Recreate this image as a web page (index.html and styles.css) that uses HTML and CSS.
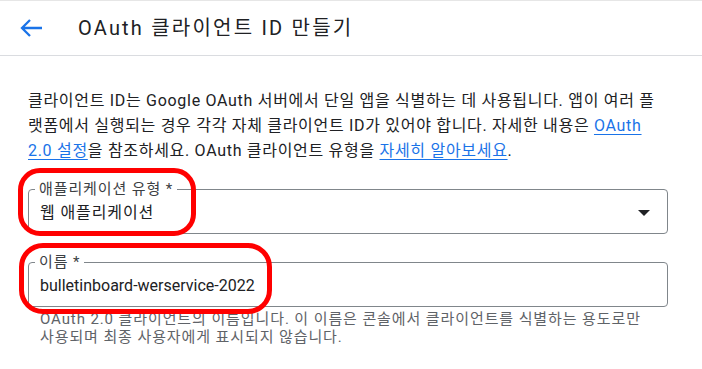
FILE: index.html
```html
<!DOCTYPE html>
<html lang="ko">
<head>
  <meta charset="UTF-8" />
  <meta name="viewport" content="width=device-width, initial-scale=1" />
  <title>OAuth 클라이언트 ID 만들기</title>
  <link rel="stylesheet" href="styles.css">
</head>
<body>
  <header class="topbar">
    <button class="back" aria-label="뒤로">
      <svg width="24" height="20" viewBox="0 0 24 20" aria-hidden="true">
        <path d="M2 10 H22 M10 2 L2 10 L10 18" fill="none" stroke="#1a73e8" stroke-width="2.3" />
      </svg>
    </button>
    <h1>OAuth 클라이언트 ID 만들기</h1>
  </header>

  <main class="content">
    <p class="intro">
      클라이언트 ID는 Google OAuth 서버에서 단일 앱을 식별하는 데 사용됩니다. 앱이 여러 플<br>랫폼에서 실행되는 경우 각각 자체 클라이언트 ID가 있어야 합니다. 자세한 내용은 <a href="#">OAuth<br>2.0 설정</a>을 참조하세요. OAuth 클라이언트 유형을 <a href="#">자세히 알아보세요</a>.
    </p>

    <fieldset class="field">
      <legend>애플리케이션 유형 *</legend>
      <div class="field-row">
        <span class="value value-ko">웹 애플리케이션</span>
        <span class="caret"></span>
      </div>
    </fieldset>

    <fieldset class="field field-name">
      <legend>이름 *</legend>
      <div class="field-row">
        <span class="value">bulletinboard-werservice-2022</span>
      </div>
    </fieldset>
    <p class="hint">OAuth 2.0 클라이언트의 이름입니다. 이 이름은 콘솔에서 클라이언트를 식별하는 용도로만<br>사용되며 최종 사용자에게 표시되지 않습니다.</p>

    <div class="mark mark-type"></div>
    <div class="mark mark-name"></div>
  </main>
</body>
</html>
```

FILE: styles.css
```css
body {
  margin: 0;
  font-family: Roboto, 'Noto Sans CJK KR', sans-serif;
  background-color: #fff;
  color: #202124;
}
.topbar {
  height: 54px;
  display: flex;
  align-items: center;
  border-top: 1px solid #e6e6e6;
  border-bottom: 1px solid #dadce0;
}
.back {
  background: none;
  border: none;
  padding: 0;
  margin: 0 0 0 20px;
  width: 24px;
  height: 20px;
  cursor: pointer;
}
.back svg {
  display: block;
}
h1 {
  margin: 0 0 0 34px;
  font-size: 20px;
  font-weight: 400;
  line-height: 28px;
  letter-spacing: 2.2px;
  color: #202124;
}
.content {
  position: relative;
  padding: 32px 0 0 28px;
  width: 640px;
}
.intro {
  margin: 0;
  width: 660px;
  font-size: 16px;
  line-height: 25px;
  letter-spacing: 0.7px;
}
.intro a {
  color: #1a73e8;
  text-decoration: underline;
  text-underline-offset: 3px;
}
.field {
  margin: 18px 0 0;
  padding: 0 17px 10px 11px;
  border: 1px solid #80868b;
  border-radius: 4px;
  min-width: 0;
}
.field legend {
  margin-left: -5px;
  padding: 0 4px;
  font-size: 15px;
  line-height: 16px;
  letter-spacing: 0.9px;
  color: #3c4043;
}
.field-row {
  display: flex;
  align-items: center;
  justify-content: space-between;
  height: 20px;
  padding-top: 6px;
}
.value {
  font-size: 16px;
  line-height: 20px;
  color: #202124;
}
.value-ko {
  letter-spacing: 0.9px;
}
.caret {
  width: 0;
  height: 0;
  border-left: 6px solid transparent;
  border-right: 6px solid transparent;
  border-top: 6px solid #202124;
}
.field-name {
  margin-top: 20px;
}
.hint {
  margin: 3px 0 0;
  padding-left: 12px;
  width: 660px;
  font-size: 15px;
  line-height: 18px;
  letter-spacing: 0.9px;
  color: #5f6368;
}
.mark {
  position: absolute;
  border: 5px solid #f00;
  border-radius: 22px;
}
.mark-type {
  left: 18px;
  top: 112px;
  width: 168px;
  height: 58px;
}
.mark-name {
  left: 19px;
  top: 187px;
  width: 243px;
  height: 61px;
  border-radius: 24px;
}
```
